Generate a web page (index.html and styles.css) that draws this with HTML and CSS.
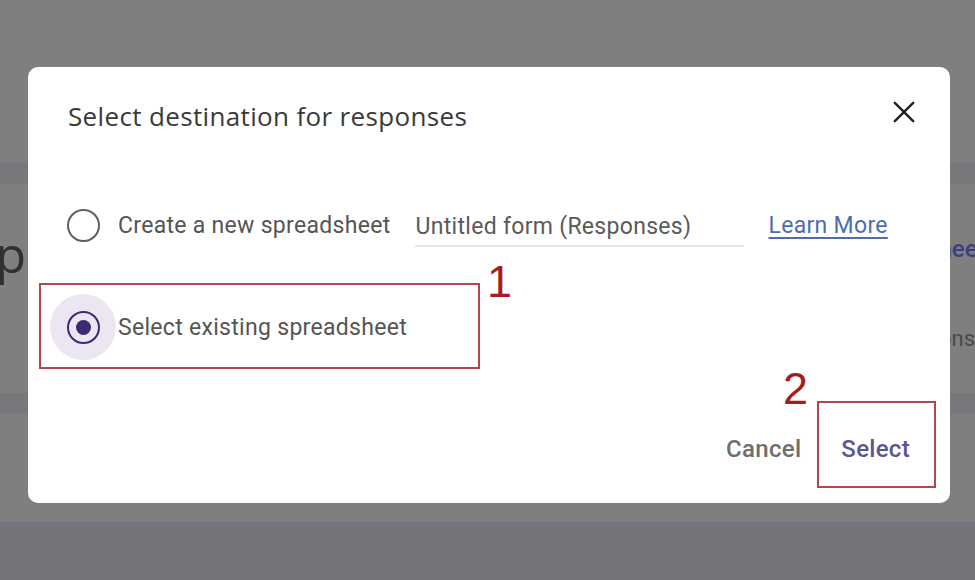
FILE: index.html
```html
<!DOCTYPE html>
<html>
<head>
<meta charset="utf-8">
<link rel="stylesheet" href="styles.css">
</head>
<body>
<div class="page">
  <div class="bg-top"></div>
  <div class="bg-band"></div>
  <div class="bg-content">
    <div class="bg-left"><span>Setup</span></div>
    <div class="bg-right">
      <span class="bg-link">Sheets</span>
      <span class="bg-muted">Responses</span>
    </div>
  </div>
  <div class="bg-band"></div>
  <div class="bg-content2"></div>
  <div class="bg-foot"></div>

  <div class="dialog">
    <div class="dlg-head">
      <h1 class="dlg-title">Select destination for responses</h1>
      <button class="icon-btn" aria-label="Close">
        <svg width="24" height="24" viewBox="0 0 24 24"><path d="M2 2 L22 22 M22 2 L2 22" stroke="#202124" stroke-width="2.6" stroke-linecap="round" fill="none"/></svg>
      </button>
    </div>
    <div class="dlg-body">
      <div class="opt opt-first">
        <span class="radio-wrap"><span class="radio"></span></span>
        <span class="opt-label">Create a new spreadsheet</span>
        <span class="field">Untitled form (Responses)</span>
        <a class="learn" href="#">Learn More</a>
      </div>
      <div class="opt opt-second">
        <span class="radio-wrap halo"><span class="radio checked"></span></span>
        <span class="opt-label">Select existing spreadsheet</span>
      </div>
    </div>
    <div class="dlg-actions">
      <button class="btn btn-cancel">Cancel</button>
      <button class="btn btn-select">Select</button>
    </div>

    <div class="mark mark-1"></div>
    <div class="num num-1">1</div>
    <div class="mark mark-2"></div>
    <div class="num num-2">2</div>
  </div>
</div>
</body>
</html>
```

FILE: styles.css
```css
* { box-sizing: border-box; }
html, body { margin: 0; padding: 0; }
body {
  width: 975px;
  height: 580px;
  overflow: hidden;
  background: #7f7f7f;
  font-family: Roboto, "Liberation Sans", sans-serif;
}
.page {
  position: relative;
  width: 975px;
  height: 580px;
  display: flex;
  flex-direction: column;
}
.bg-top { height: 163px; background: #7f7f7f; }
.bg-band { height: 21px; background: #78777b; }
.bg-content {
  height: 209px;
  background: #7f7f7f;
  display: flex;
  justify-content: space-between;
}
.bg-left {
  width: 26px;
  overflow: hidden;
  display: flex;
  justify-content: flex-end;
  padding-top: 40px;
}
.bg-left span {
  font-family: "Open Sans", sans-serif;
  font-size: 50px;
  line-height: 60px;
  color: #303030;
  white-space: nowrap;
}
.bg-right {
  width: 73px;
  overflow: hidden;
  display: flex;
  flex-direction: column;
  align-items: flex-start;
  padding-top: 52px;
  gap: 64px;
}
.bg-right span { white-space: nowrap; line-height: 26px; }
.bg-link { color: #3c3f7e; font-weight: 500; font-size: 24px; margin-left: 22px; }
.bg-muted { color: #4a4a4a; font-size: 22px; margin-left: -12px; }
.bg-content2 { height: 108px; background: #7f7f7f; }
.bg-foot { flex: 1; background: #76747a; }

.dialog {
  position: absolute;
  left: 28px;
  top: 67px;
  width: 922px;
  height: 436px;
  background: #fff;
  border-radius: 10px;
  display: flex;
  flex-direction: column;
}
.dlg-head {
  display: flex;
  align-items: flex-start;
  justify-content: space-between;
  padding: 25px 26px 0 40px;
  height: 81px;
}
.dlg-title {
  margin: 8px 0 0;
  font-family: "Open Sans", sans-serif;
  font-size: 26px;
  font-weight: 400;
  line-height: 32px;
  color: #3a3a3a;
  letter-spacing: 0.35px;
}
.icon-btn {
  width: 40px;
  height: 40px;
  border: 0;
  background: transparent;
  padding: 0;
  display: flex;
  align-items: center;
  justify-content: center;
}
.icon-btn svg { width: 22px; height: 22px; }

.dlg-body { display: flex; flex-direction: column; padding-left: 22px; }
.opt { display: flex; align-items: center; height: 64px; }
.opt-first { margin-top: 45px; }
.opt-second { margin-top: 38px; }
.radio-wrap {
  width: 66px;
  height: 66px;
  border-radius: 50%;
  display: flex;
  align-items: center;
  justify-content: center;
  flex: none;
}
.halo { background: #ebe6f2; }
.radio {
  width: 33px;
  height: 33px;
  border-radius: 50%;
  border: 2.5px solid #5f5f5f;
  display: flex;
  align-items: center;
  justify-content: center;
}
.radio.checked { border-color: #3b2a73; }
.radio.checked::after {
  content: "";
  width: 15px;
  height: 15px;
  border-radius: 50%;
  background: #3b2a73;
}
.opt-label {
  margin-left: 2px;
  font-size: 23px;
  color: #555;
  letter-spacing: 0.3px;
  white-space: nowrap;
}
.field {
  margin-left: 24px;
  width: 329px;
  height: 40px;
  padding-left: 1px;
  display: flex;
  align-items: center;
  font-size: 23px;
  color: #5a5a5a;
  letter-spacing: 0.3px;
  border-bottom: 2px solid #e6e6e6;
  margin-top: 4px;
  white-space: nowrap;
}
.learn {
  margin-left: 25px;
  font-size: 23px;
  color: #4d6db0;
  text-decoration: underline;
  text-underline-offset: 4px;
  letter-spacing: 0.3px;
  white-space: nowrap;
}

.dlg-actions {
  margin-top: auto;
  display: flex;
  justify-content: flex-end;
  align-items: center;
  gap: 4px;
  padding: 0 22px 34px 0;
}
.btn {
  border: 0;
  background: transparent;
  font-family: Roboto, sans-serif;
  font-weight: 500;
  font-size: 24px;
  height: 40px;
  padding: 0 18px;
  letter-spacing: 0.3px;
}
.btn-cancel { color: #6e6e6e; }
.btn-select { color: #5d5592; }

.mark {
  position: absolute;
  border: 2px solid #b0474c;
}
.mark-1 { left: 11px; top: 216px; width: 441px; height: 86px; }
.mark-2 { left: 789px; top: 334px; width: 119px; height: 87px; }
.num {
  position: absolute;
  font-family: "Liberation Sans", sans-serif;
  font-size: 45px;
  line-height: 45px;
  color: #a51d22;
}
.num-1 { left: 459px; top: 192px; }
.num-2 { left: 755px; top: 299px; }
```
